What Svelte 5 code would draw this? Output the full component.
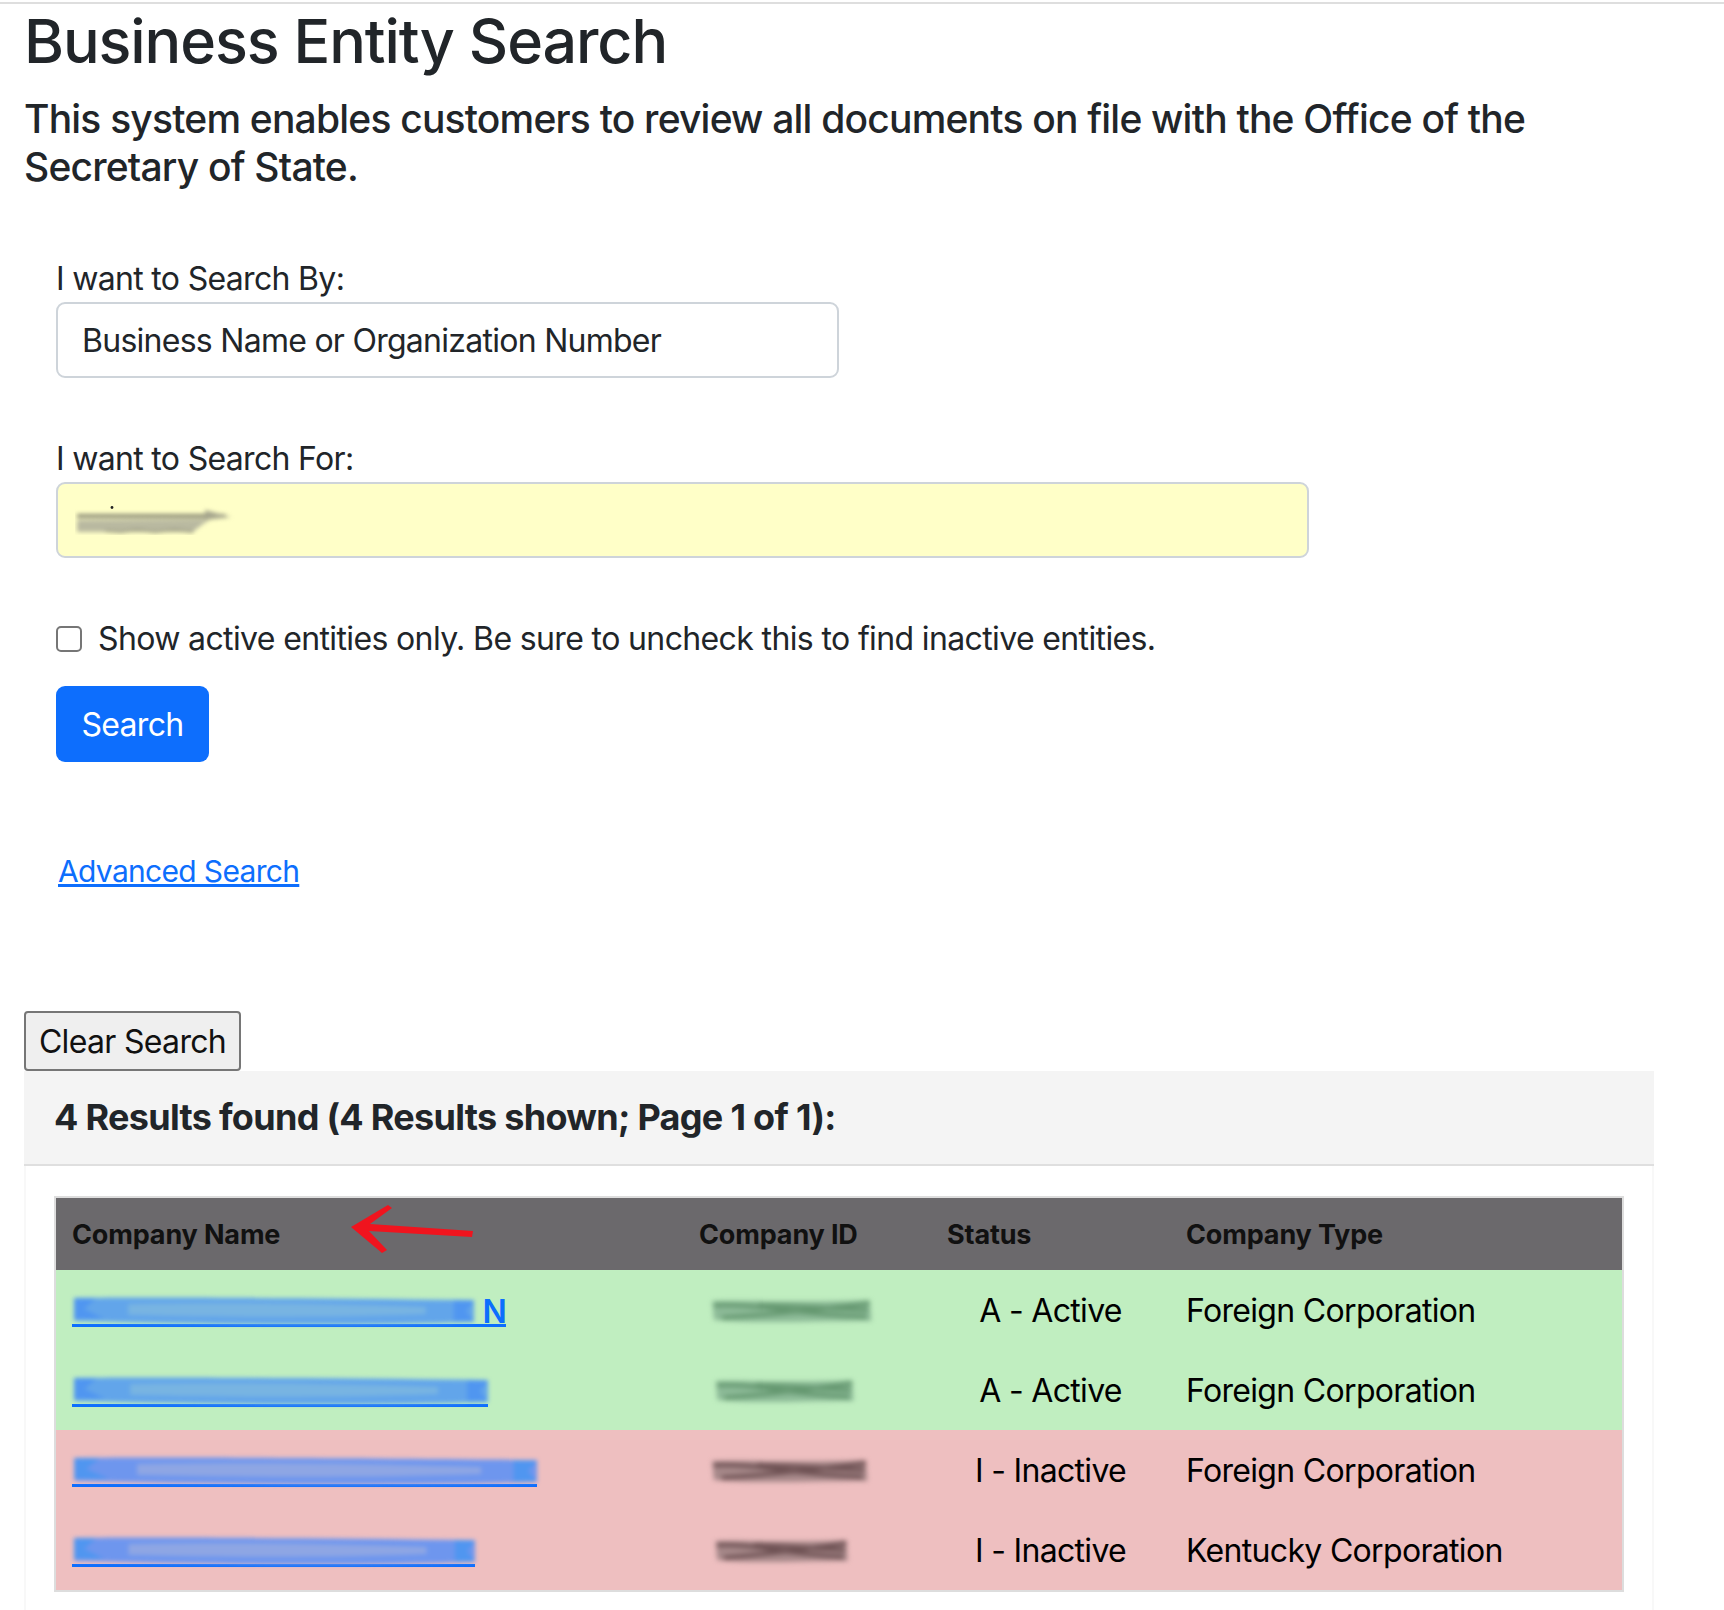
<script>
  const rows = [
    { tone: "ok", status: "A - Active", type: "Foreign Corporation", name: 402, tail: "N", id: 164, idOffset: 10 },
    { tone: "ok", status: "A - Active", type: "Foreign Corporation", name: 416, tail: "", id: 142, idOffset: 14 },
    { tone: "off", status: "I - Inactive", type: "Foreign Corporation", name: 465, tail: "", id: 160, idOffset: 10 },
    { tone: "off", status: "I - Inactive", type: "Kentucky Corporation", name: 403, tail: "", id: 136, idOffset: 14 }
  ];
</script>

<div class="topline"></div>
<main>
  <h1>Business Entity Search</h1>
  <h2>This system enables customers to review all documents on file with the Office of the Secretary of State.</h2>

  <form class="search" onsubmit={(e) => e.preventDefault()}>
    <label for="by">I want to Search By:</label>
    <div id="by" class="control by">Business Name or Organization Number</div>

    <label for="for" class="second">I want to Search For:</label>
    <div id="for" class="control term">
      <svg class="smudge" width="160" height="30" viewBox="0 0 160 30">
        <g class="soft">
          <path d="M2 11 L150 11" stroke="#8f8f78" stroke-width="4" />
          <path d="M2 15 L135 14 L124 22 L118 27 L2 27 Z" fill="#b9b9a0" />
          <path d="M30 26 L46 27 L62 25 L80 27 L100 25 L118 27" stroke="#96967e" stroke-width="2" />
          <path d="M130 5 L156 12 L130 15 Z" fill="#a5a58c" />
        </g>
        <circle cx="37" cy="2.5" r="1.4" fill="#222" />
      </svg>
    </div>

    <div class="check">
      <input type="checkbox" id="active" />
      <label for="active">Show active entities only. Be sure to uncheck this to find inactive entities.</label>
    </div>

    <button class="primary" type="submit">Search</button>
    <a class="advanced" href="#advanced">Advanced Search</a>
  </form>

  <button class="clear" type="button">Clear Search</button>

  <section class="card">
    <header>4 Results found (4 Results shown; Page 1 of 1):</header>
    <div class="card-body">
      <table>
        <colgroup>
          <col class="c-name" /><col class="c-id" /><col class="c-status" /><col />
        </colgroup>
        <thead>
          <tr>
            <th class="name-head">
              Company Name
              <svg class="arrow" width="124" height="50" viewBox="0 0 124 50">
                <path d="M38 1 L1 23 L32 49 L37 46 L19 27 L122 33 L123 27 L20 20 L42 4 Z" fill="#f0141e" />
              </svg>
            </th>
            <th>Company ID</th>
            <th>Status</th>
            <th>Company Type</th>
          </tr>
        </thead>
        <tbody>
          {#each rows as row}
            <tr class={row.tone}>
              <td>
                <a class="redacted" href="#company" style="width: {row.name + (row.tail ? 32 : 0)}px">
                  <svg class="name-smear" width={row.name} height="34" viewBox="0 0 100 34" preserveAspectRatio="none">
                    <path class="band" d="M0.5 6 C20 5 60 6 100 8 L100 30 C70 34 40 33 0.5 29 Z" />
                    <path class="streak" d="M14 12 C40 10 60 11 88 15 L88 22 C60 26 40 25 14 23 Z" />
                    <path class="chunk" d="M0.5 6 L6 6 L3 17 L8 27 L0.5 27 Z" />
                    <path class="edge" d="M95 8 L100 9 L98 19 L100 30 L95 30 Z" />
                  </svg>
                  {#if row.tail}<span>{row.tail}</span>{/if}
                </a>
              </td>
              <td>
                <svg class="id-smear" style="margin-left: {row.idOffset}px" width={row.id} height="28" viewBox="0 0 100 28" preserveAspectRatio="none">
                  <path class="id-base" d="M2 4 C30 3 60 6 98 3 L99 24 C60 24 30 27 3 23 Z" />
                  <path class="id-line" d="M3 8 C30 6 50 17 96 20" />
                  <path class="id-line" d="M8 21 C40 17 70 12 98 6" />
                  <path class="id-line" d="M30 8 C50 8 75 12 97 13" />
                </svg>
              </td>
              <td class="status">{row.status}</td>
              <td>{row.type}</td>
            </tr>
          {/each}
        </tbody>
      </table>
    </div>
  </section>
</main>

<style>
  :global(body) {
    margin: 0;
    background: #fff;
    color: #212529;
    font-family: Inter, "Liberation Sans", sans-serif;
    font-size: 32px;
    line-height: 48px;
    letter-spacing: -0.68px;
  }
  .topline {
    margin-top: 2px;
    height: 2px;
    background: #dedede;
  }
  main {
    padding-left: 24px;
    width: 1630px;
  }
  h1 {
    margin: 0;
    font-size: 61px;
    line-height: 74px;
    font-weight: 500;
    letter-spacing: -1.1px;
  }
  h2 {
    margin: 17px 0 0;
    font-size: 39px;
    line-height: 48px;
    font-weight: 500;
    letter-spacing: -0.8px;
    width: 1560px;
  }
  .search {
    padding-left: 32px;
    margin-top: 64px;
    display: flex;
    flex-direction: column;
    align-items: flex-start;
  }
  .search > label {
    height: 47px;
  }
  .control {
    box-sizing: border-box;
    height: 76px;
    padding: 13px 24px;
    border: 2px solid #ced4da;
    border-radius: 9px;
  }
  .by {
    width: 783px;
    letter-spacing: -0.73px;
  }
  .term {
    width: 1253px;
    background: #ffffc8;
    padding: 0;
    display: flex;
    align-items: center;
  }
  .second {
    margin-top: 57px;
  }
  .smudge {
    margin-left: 17px;
  }
  .soft {
    filter: blur(2px);
    fill: none;
  }
  .check {
    margin-top: 57px;
    height: 47px;
    display: flex;
    align-items: center;
    gap: 16px;
    letter-spacing: -0.63px;
  }
  .check input {
    appearance: none;
    margin: 0;
    width: 26px;
    height: 26px;
    box-sizing: border-box;
    border: 2px solid #767676;
    border-radius: 5px;
    background: #fff;
  }
  .primary {
    margin-top: 24px;
    box-sizing: border-box;
    width: 153px;
    height: 76px;
    padding: 2px 0 0;
    border: 0;
    border-radius: 9px;
    background: #0d6efd;
    color: #fff;
    font: inherit;
    letter-spacing: inherit;
  }
  .advanced {
    margin: 86px 0 0 2px;
    color: #0d6efd;
    font-size: 30px;
    line-height: 46px;
  }
  .clear {
    display: block;
    margin-top: 117px;
    box-sizing: border-box;
    width: 217px;
    height: 60px;
    padding: 2px 0 0;
    border: 2px solid #767676;
    border-radius: 4px;
    background: #efefef;
    color: #111;
    font: inherit;
    letter-spacing: inherit;
  }
  .card {
    box-sizing: border-box;
    width: 1630px;
    border: 2px solid #f8f8f8;
    border-width: 0 2px;
  }
  .card header {
    box-sizing: border-box;
    height: 95px;
    margin: 0 -2px;
    padding: 22px 30px;
    background: #f4f4f4;
    border-bottom: 2px solid #dfdfdf;
    font-size: 36px;
    font-weight: 700;
    letter-spacing: -0.7px;
  }
  .card-body {
    padding: 30px 28px 20px;
  }
  table {
    box-sizing: border-box;
    width: 1570px;
    table-layout: fixed;
    border-collapse: separate;
    border-spacing: 0;
    border: 2px solid #dddddd;
    color: #000;
  }
  .c-name {
    width: 627px;
  }
  .c-id {
    width: 248px;
  }
  .c-status {
    width: 239px;
  }
  th {
    height: 70px;
    padding: 2px 16px 0;
    background: #6b696c;
    color: #111;
    text-align: left;
    font-size: 27px;
    font-weight: 700;
    letter-spacing: -0.15px;
  }
  .name-head {
    position: relative;
  }
  .arrow {
    position: absolute;
    left: 294px;
    top: 6px;
  }
  td {
    height: 78px;
    padding: 2px 16px 0;
  }
  .ok td {
    background: #c0eec0;
  }
  .off td {
    background: #eebfc0;
  }
  .status {
    text-align: center;
  }
  .redacted {
    display: flex;
    align-items: center;
    height: 30px;
    margin-top: -2px;
    border-bottom: 3px solid #0d6efd;
    color: #0d6efd;
    text-decoration: none;
    font-weight: 600;
  }
  .redacted span {
    line-height: 34px;
    margin: 6px 0 0 auto;
  }
  .name-smear {
    flex: none;
    overflow: visible;
    filter: blur(2px);
  }
  .ok .band {
    fill: #62a5ea;
  }
  .off .band {
    fill: #6e96ee;
  }
  .ok .streak {
    fill: #78b4e2;
  }
  .off .streak {
    fill: #8ea6e4;
  }
  .chunk,
  .edge {
    fill: #5096f0;
  }
  .id-smear {
    display: block;
    overflow: visible;
    filter: blur(2.4px);
  }
  .ok .id-base {
    fill: #8cba97;
  }
  .off .id-base {
    fill: #a68889;
  }
  .id-line {
    fill: none;
    stroke-width: 4px;
    vector-effect: non-scaling-stroke;
  }
  .ok .id-line {
    stroke: #659870;
  }
  .off .id-line {
    stroke: #6f5254;
  }
</style>
